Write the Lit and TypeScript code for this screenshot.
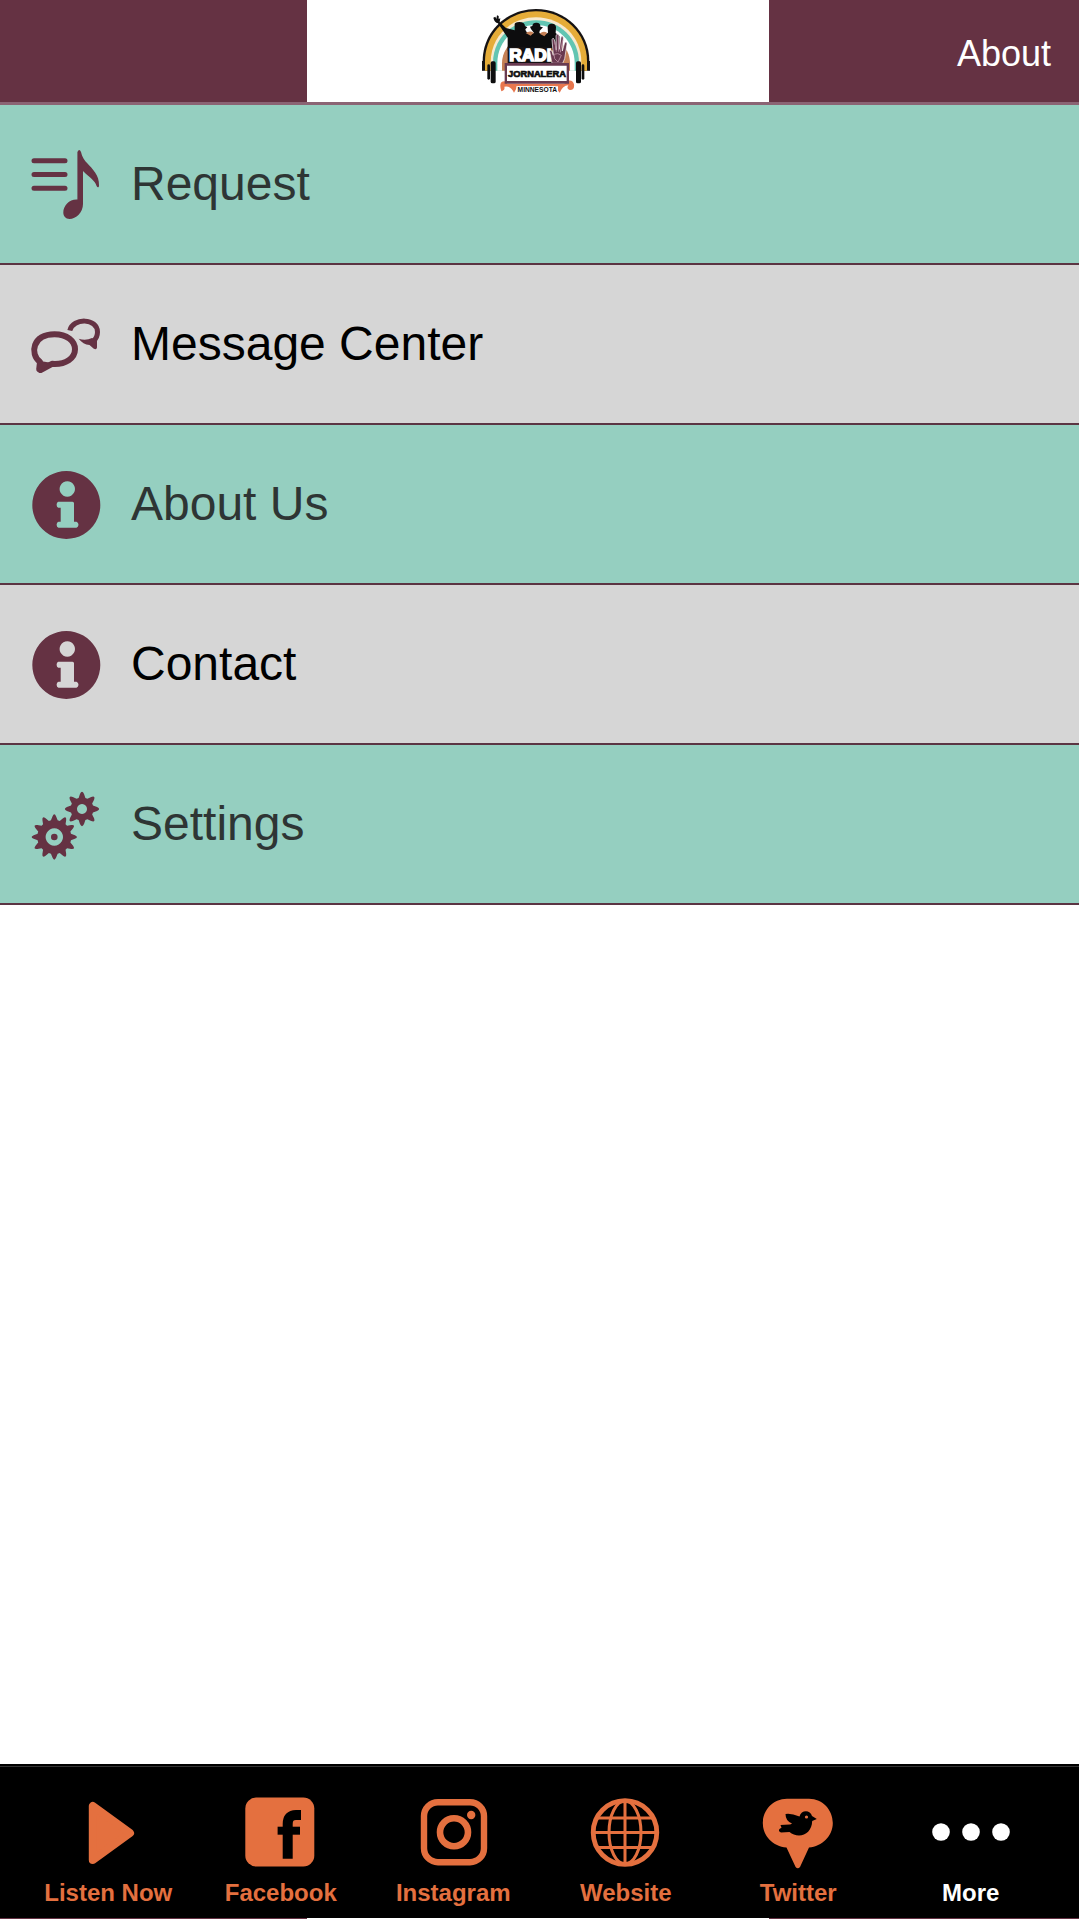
import { LitElement, html, svg, css, type SVGTemplateResult } from "lit";
import { customElement } from "lit/decorators.js";

interface Entry {
  label: string;
  href: string;
  icon: SVGTemplateResult;
}

/** Outline of a gear with softly pointed teeth. */
function gearPath(cx: number, cy: number, outer: number, root: number, teeth: number): string {
  const at = (r: number, a: number) =>
    `${(cx + r * Math.sin(a)).toFixed(2)} ${(cy - r * Math.cos(a)).toFixed(2)}`;
  const step = (Math.PI * 2) / teeth;
  let d = "";
  for (let i = 0; i < teeth; i++) {
    const a = i * step;
    d += `${i ? "L" : "M"}${at(root, a - step * 0.38)}L${at(outer - 2, a - step * 0.17)}`;
    d += `Q${at(outer + 2, a)} ${at(outer - 2, a + step * 0.17)}L${at(root, a + step * 0.38)}`;
  }
  return d + "Z";
}

const noteIcon = svg`
  <path d="M3 11.7H34M3 25.6H34M3 39.2H34" fill="none" stroke="currentColor" stroke-width="5" stroke-linecap="round"/>
  <path d="M46.400 3Q48.300-.8 50 3C51 8 53.500 11.500 56.500 14.500C61 19.500 68.500 26 68 36.500C68 38.800 66.400 39 65.600 37C64 31.500 59 29 52 22V55C52 63.500 45 70 38.500 70C34.500 70 32.300 67 32.300 63.500C32.300 56.500 38.500 50 46.400 50.500Z" fill="currentColor"/>`;

const chatIcon = svg`
  <path d="M9 53C-1.500 45 1.500 25.200 23.500 25.200C36 25.200 44 32 44 40.300C44 49 35 55.800 21 54.800L9.500 61L8.200 60.300Z" fill="none" stroke="currentColor" stroke-width="6" stroke-linejoin="round"/>
  <path d="M9 53L21 55L9 63Z" fill="currentColor" stroke="currentColor" stroke-width="2" stroke-linejoin="round"/>
  <path d="M38.800 21.500C42 8.500 66.500 9 66.500 23C66.500 28 64.500 30.500 62 32.500" fill="none" stroke="currentColor" stroke-width="5"/>
  <path d="M47.700 29.800Q55 32 61 29L66 32V38.500Q65.500 41.500 62.500 39.500L58.500 36Q52 35.500 47.700 29.800Z" fill="currentColor"/>`;

const infoIcon = svg`
  <path fill-rule="evenodd" fill="currentColor" d="M35.300 2a34 34 0 1 0 .01 0ZM36.300 12.300a7.700 7.700 0 1 1-.01 0ZM27.300 32.700H41.500Q43 32.700 43 34.200V52.700H45.500Q47.500 53.500 47.500 55.700T45.500 58.700H27.500Q25.600 58 25.600 55.700T27.500 52.700H29.700V38.700H27.300Q25.600 38 25.600 35.700T27.300 32.700Z"/>`;

const gearsIcon = svg`
  <path fill-rule="evenodd" fill="currentColor" d="${gearPath(23.3, 48, 22.7, 17, 12)}M23.300 39.300a8.700 8.700 0 1 0 .01 0Z"/>
  <circle cx="23.300" cy="48" r="3.300" fill="currentColor"/>
  <path fill-rule="evenodd" fill="currentColor" d="${gearPath(51, 20, 17.2, 11.5, 8)}M51 15a5 5 0 1 0 .01 0Z"/>`;

const playIcon = svg`
  <path fill="currentColor" stroke="currentColor" stroke-width="8" stroke-linejoin="round" d="M19.800 9V63L57 36Z"/>`;

const facebookIcon = svg`
  <rect x="-.7" y=".5" width="69" height="69" rx="11" fill="currentColor"/>
  <path d="M41.700 61.700V27Q41.700 18 50 18H55" fill="none" stroke="#000" stroke-width="10"/>
  <path d="M31.600 33.700H54" fill="none" stroke="#000" stroke-width="8"/>`;

const instagramIcon = svg`
  <rect x="6" y="5.200" width="60" height="60" rx="14" fill="none" stroke="currentColor" stroke-width="6.400"/>
  <circle cx="36" cy="35.300" r="14" fill="none" stroke="currentColor" stroke-width="6.600"/>
  <circle cx="53.200" cy="18" r="4.200" fill="currentColor"/>`;

const globeIcon = svg`
  <g fill="none" stroke="currentColor">
    <circle cx="34" cy="35.500" r="31.800" stroke-width="4.800"/>
    <path d="M34 3V68M2 35.500H66M6 21H62M6 50.500H62" stroke-width="3"/>
    <ellipse cx="34" cy="35.500" rx="16" ry="31.500" stroke-width="3"/>
  </g>`;

const twitterIcon = svg`
  <path fill="currentColor" d="M24 1.700H46C60 1.700 69.800 13 69.800 26S59 49.500 46 50.500L37 70Q34.800 72.500 32.600 70L23.500 50.500C10 49.500-.2 39-.2 26S10 1.700 24 1.700Z"/>
  <path fill="#000" d="M22.500 17Q28 16 36.500 19.500C38 12.500 47.500 12.500 49 19L53.800 22L49.200 24C49 33 43 38.500 36 38.500Q30.500 38.300 26.500 35L18 35.500Q14.500 34 16.800 31.800L18.500 30.800L17.500 28L26.500 27.500Q28 27.500 29 26.500Q22.500 24 22.500 17Z"/>
  <circle cx="43.500" cy="20" r="1.600" fill="currentColor"/>`;

const dotsIcon = svg`
  <g fill="currentColor"><circle cx="5" cy="35" r="8.800"/><circle cx="35" cy="35" r="8.800"/><circle cx="65" cy="35" r="8.800"/></g>`;

const MENU: Entry[] = [
  { label: "Request", href: "#request", icon: noteIcon },
  { label: "Message Center", href: "#messages", icon: chatIcon },
  { label: "About Us", href: "#about", icon: infoIcon },
  { label: "Contact", href: "#contact", icon: infoIcon },
  { label: "Settings", href: "#settings", icon: gearsIcon },
];

const TABS: Entry[] = [
  { label: "Listen Now", href: "#listen", icon: playIcon },
  { label: "Facebook", href: "#facebook", icon: facebookIcon },
  { label: "Instagram", href: "#instagram", icon: instagramIcon },
  { label: "Website", href: "#website", icon: globeIcon },
  { label: "Twitter", href: "#twitter", icon: twitterIcon },
  { label: "More", href: "#more", icon: dotsIcon },
];

const icon = (shape: SVGTemplateResult) =>
  html`<svg class="icon" viewBox="0 0 70 70" aria-hidden="true">${shape}</svg>`;

@customElement("station-logo")
export class StationLogo extends LitElement {
  static styles = css`
    :host { display: block; }
    .logo { display: block; width: 120px; height: 86px; }
    .word { font-family: "Liberation Sans", Arial, sans-serif; font-weight: bold; }
    .radio { font-size: 52px; }
    .name { font-size: 28px; }
    .state { font-size: 20px; }
  `;

  render() {
    return html`<svg class="logo" viewBox="24 24 360 258" role="img" aria-label="Radio Jornalera Minnesota">
      <path d="M38 212V183C38 95 110 27 198 27S358 95 358 183V212Z" fill="#151213"/>
      <path d="M45 212V184C45 99 114 34 198 34S351 99 351 184V212Z" fill="#e5ac38"/>
      <path d="M62 212V186C62 110 122 52 198 52S334 110 334 186V212Z" fill="#f6ead0"/>
      <path d="M69 212V188C69 116 127 61 198 61S327 116 327 188V212Z" fill="#62c5b2"/>
      <path d="M82 212V190C82 124 133 75 198 75S314 124 314 190V212Z" fill="#fff"/>
      <path d="M96 212V190C96 140 142 100 198 100S300 140 300 190V212Z" fill="#c58056"/>
      <path d="M38 183V212M358 183V212" stroke="#151213" stroke-width="4"/>
      <g fill="#0d0d0e">
        <path d="M70 53L76 50L79 57L81 46L86 48L86 57L91 55L89 66L108 84L134 91V76Q132 66 148 66T165 78L172 82L166 88L168 94L180 104L192 99L183 87L180 80L187 78Q188 67 200 68T211 80L219 82L209 92L208 99L221 105L234 98L233 82Q234 70 246 71T258 82L257 99L269 109V150L113 152V113L84 70Q73 67 70 53Z"/>
        <rect x="52" y="193" width="8" height="46" rx="4"/><rect x="62" y="184" width="15" height="66" rx="5"/>
        <rect x="318" y="184" width="15" height="66" rx="5"/><rect x="335" y="193" width="8" height="46" rx="4"/>
      </g>
      <path d="M167 99Q180 90 191 98L182 107ZM209 101Q220 91 232 99L223 109Z" fill="#c58056"/>
      <path d="M113 140H246V190H113Z" fill="#151213"/>
      <text class="word radio" x="118" y="184" fill="#fff" stroke="#fff" stroke-width="5">RADI</text>
      <path d="M246 190L239 154Q240 148 246 153L250 166L246 119Q249 110 253 119L259 150L258 106Q263 98 267 107L268 148L273 111Q279 104 280 114L277 153L284 128Q291 122 291 132L284 176L278 190Z" fill="#693a50" stroke="#fff" stroke-width="2"/>
      <path d="M252 163Q264 157 274 166L264 186L254 176ZM255 124L259 155M266 113V155M278 121L271 157" fill="none" stroke="#b18498" stroke-width="3"/>
      <path d="M94 274Q83 239 111 245V251H284V245Q308 235 312 253Q314 271 299 270Q288 267 295 256Q278 257 269 278L254 259H143L132 278Q122 256 103 260Q106 271 94 274Z" fill="#e8774f"/>
      <path d="M104 189H297V251H104Z" fill="#693a50"/>
      <path d="M111 197H290V243H111Z" fill="#fff"/>
      <text class="word name" x="201" y="231" text-anchor="middle" fill="#0d0d0e" stroke="#0d0d0e" stroke-width="2">JORNALERA</text>
      <path d="M139 259H264V279H139Z" fill="#fff"/>
      <text class="word state" x="202" y="277" text-anchor="middle" fill="#0d0d0e">MINNESOTA</text>
    </svg>`;
  }
}

@customElement("app-root")
export class AppRoot extends LitElement {
  static styles = css`
    :host {
      --maroon: #653243;
      --teal: #95cfc0;
      --grey: #d6d6d6;
      --orange: #e4703f;
      --thirds: 307fr 462fr 310fr;
      display: flex;
      flex-direction: column;
      min-height: 100vh;
      background: #fff;
      font-family: "Liberation Sans", Arial, Helvetica, sans-serif;
    }
    * { box-sizing: border-box; }
    a { color: inherit; text-decoration: none; }
    ul { list-style: none; margin: 0; padding: 0; }
    .icon { display: block; flex: none; width: 70px; height: 70px; overflow: visible; }
    .header {
      display: grid;
      grid-template-columns: var(--thirds);
      align-items: stretch;
      background: var(--maroon);
      border-bottom: 3px solid #8b6474;
    }
    .brand { grid-column: 2; display: flex; justify-content: center; padding: 8px 0; background: #fff; }
    .title {
      display: flex;
      align-items: center;
      justify-content: flex-end;
      margin: 0;
      padding: 6px 28px 0 0;
      color: #fff;
      font-size: 36px;
      font-weight: normal;
    }
    .content { flex: 1; }
    .row {
      display: flex;
      align-items: center;
      gap: 30px;
      height: 160px;
      padding: 0 31px;
      border-bottom: 2px solid #5b3543;
      background: var(--teal);
      color: #2e3534;
      font-size: 48px;
    }
    .row .icon { color: var(--maroon); }
    .name { padding-bottom: 2px; }
    .item:nth-child(even) .row { background: var(--grey); color: #000; }
    .tabbar { padding-top: 2px; background: #000; }
    .tabs {
      display: grid;
      grid-template-columns: repeat(6, 1fr);
      padding: 30px 22px 11px;
      border-top: 1px solid #333;
    }
    .tab {
      display: flex;
      flex-direction: column;
      align-items: center;
      gap: 12px;
      color: var(--orange);
      font-size: 24px;
      font-weight: bold;
      line-height: 28px;
      white-space: nowrap;
    }
    .tab.current { color: #fff; }
    .edge { display: grid; grid-template-columns: var(--thirds); height: 1px; background: var(--maroon); }
    .edge-gap { grid-column: 2; background: #fff; }
  `;

  render() {
    return html`
      <header class="header">
        <div class="brand"><station-logo></station-logo></div>
        <h1 class="title">About</h1>
      </header>
      <main class="content">
        <ul>
          ${MENU.map((e) => html`<li class="item"><a class="row" href=${e.href}>${icon(e.icon)}<span class="name">${e.label}</span></a></li>`)}
        </ul>
      </main>
      <nav class="tabbar" aria-label="Sections">
        <ul class="tabs">
          ${TABS.map((e) => html`<li><a class="tab ${e.label === "More" ? "current" : ""}" href=${e.href}>${icon(e.icon)}<span>${e.label}</span></a></li>`)}
        </ul>
      </nav>
      <div class="edge"><div class="edge-gap"></div></div>
    `;
  }
}
